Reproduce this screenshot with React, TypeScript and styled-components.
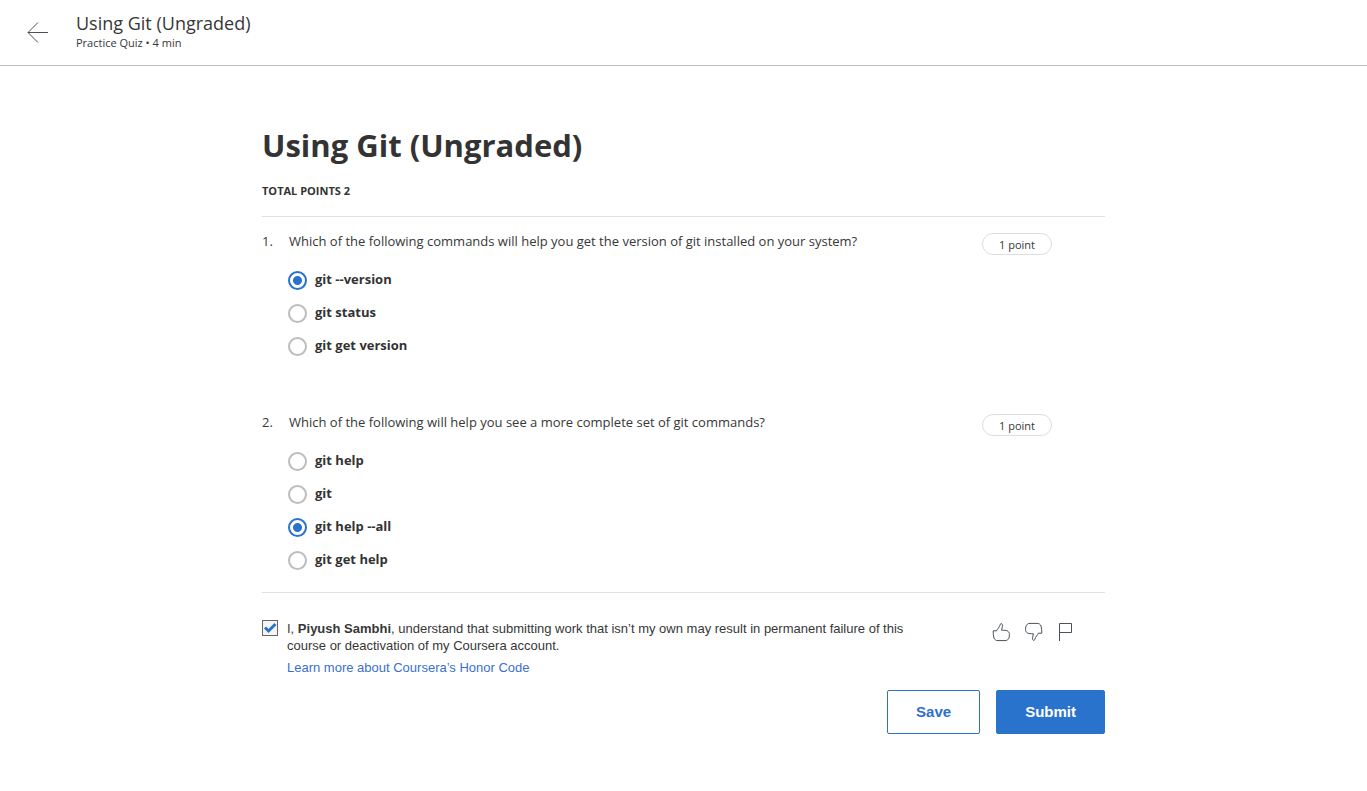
import React, { useState } from "react";
import styled, { createGlobalStyle } from "styled-components";

const blue = "#2a73cc";
const ink = "#373737";
const openSans = `"Open Sans", "Noto Sans", sans-serif`;
const arial = `"Liberation Sans", Arial, sans-serif`;

const GlobalStyle = createGlobalStyle`
  *, *::before, *::after { box-sizing: border-box; }
  body { margin: 0; background: #fff; color: ${ink}; font-family: ${openSans}; }
  h1, h2, p, ol, fieldset, legend { margin: 0; padding: 0; border: 0; font-weight: 400; }
`;

const Header = styled.header`
  display: flex;
  align-items: center;
  gap: 26px;
  height: 66px;
  padding-left: 25px;
  border-bottom: 1px solid #bdbdbd;
`;

const IconButton = styled.button`
  display: flex;
  padding: 0;
  border: 0;
  background: none;
  color: #4a5159;
  cursor: pointer;
`;

const HeaderText = styled.div`
  padding-bottom: 4px;
`;

const HeaderTitle = styled.h2`
  font-size: 18px;
  line-height: 24px;
`;

const HeaderMeta = styled.p`
  font-size: 11px;
  line-height: 15px;
`;

const Main = styled.main`
  max-width: 843px;
  margin: 0 auto;
  padding: 57px 0;
`;

const Title = styled.h1`
  font-size: 31px;
  line-height: 44px;
  font-weight: 700;
  color: #333;
`;

const TotalPoints = styled.p`
  margin-top: 16px;
  font-size: 11px;
  line-height: 16px;
  font-weight: 700;
  color: #333;
`;

const Questions = styled.ol`
  display: grid;
  gap: 52px;
  margin-top: 17px;
  padding: 16px 0;
  border: solid #e1e1e1;
  border-width: 1px 0;
  list-style: none;
`;

const QuestionItem = styled.li`
  display: grid;
  grid-template-columns: 27px 1fr 70px;
  padding-right: 53px;
  font-size: 13px;
  line-height: 17px;
`;

const Pill = styled.span`
  height: 22px;
  border: 1px solid #dedede;
  border-radius: 11px;
  font-size: 11px;
  line-height: 22px;
  text-align: center;
`;

const Options = styled.fieldset`
  grid-column: 2 / -1;
  min-width: 0;
  padding-top: 8px;
`;

const Option = styled.label`
  display: flex;
  align-items: center;
  gap: 8px;
  width: max-content;
  height: 33px;
  margin-left: -1px;
  font-weight: 700;
  color: #333;
  cursor: pointer;
`;

const Radio = styled.input`
  appearance: none;
  width: 19px;
  height: 19px;
  margin: 2px 0 0;
  border: 2px solid #bdbdbd;
  border-radius: 50%;
  background: #fff;

  &:checked {
    border-color: ${blue};
    background: radial-gradient(circle, ${blue} 4px, #fff 5px);
  }
`;

const Agreement = styled.section`
  display: flex;
  align-items: flex-start;
  justify-content: space-between;
  gap: 24px;
  padding: 27px 32px 0 0;
  font-family: ${arial};
  font-size: 13px;
  line-height: 17px;
`;

const AgreementBody = styled.div`
  display: grid;
  grid-template-columns: 16px 1fr;
  column-gap: 9px;
  max-width: 656px;
`;

const CheckWrap = styled.span`
  display: grid;
  height: 16px;
  color: ${blue};

  > * { grid-area: 1 / 1; }
  svg { pointer-events: none; }
`;

const Checkbox = styled.input`
  appearance: none;
  width: 16px;
  height: 16px;
  margin: 0;
  border: 1px solid #666;
  background: #f5f5f5;

  &:not(:checked) + svg { visibility: hidden; }
`;

const HonorLink = styled.a`
  grid-column: 2;
  justify-self: start;
  margin-top: 5px;
  color: #3a6fd0;
  text-decoration: none;
`;

const Feedback = styled.div`
  display: flex;
  gap: 15px;
  padding-top: 2px;
`;

const Actions = styled.div`
  display: flex;
  justify-content: flex-end;
  gap: 16px;
  margin-top: 14px;
`;

const ActionButton = styled.button<{ $primary?: boolean }>`
  height: 44px;
  padding: 0 28px;
  border: 1px solid ${blue};
  border-radius: 2px;
  background: ${(p) => (p.$primary ? blue : "#fff")};
  color: ${(p) => (p.$primary ? "#fff" : "#2f6fd0")};
  font: 700 15px/20px ${arial};
  cursor: pointer;
`;

const thumbPath =
  "M1.2 8.8H4.7C5.2 6.8 7.4 5.6 8.2 2.8C8.5 1.6 8.9 1.4 9.5 1.6C10.7 2.2 10.5 3.5 10.3 4.8L9.6 8.2C12 8.4 14 8.2 15.2 8.8C16.6 9.5 17.4 10.6 17.4 12.6C17.4 14.4 17.2 16 16.2 17.2C15.4 18.2 14.6 18.6 13 18.6H6C4 18.6 2.6 17.8 2 16C1.3 13.6 1.2 11.6 1.2 8.8Z";

const ThumbIcon = ({ down }: { down?: boolean }) => (
  <svg width="18" height="20" viewBox="0 0 18 20" fill="none" stroke="currentColor" strokeLinejoin="round">
    <path d={thumbPath} transform={down ? "rotate(180 9 10)" : undefined} />
  </svg>
);

const questions = [
  {
    text: "Which of the following commands will help you get the version of git installed on your system?",
    options: ["git --version", "git status", "git get version"],
    answer: 0,
  },
  {
    text: "Which of the following will help you see a more complete set of git commands?",
    options: ["git help", "git", "git help --all", "git get help"],
    answer: 2,
  },
];

function Question({ index }: { index: number }) {
  const q = questions[index];
  const [picked, setPicked] = useState(q.answer);
  return (
    <QuestionItem>
      <span>{index + 1}.</span>
      <p id={`question-${index}`}>{q.text}</p>
      <Pill>1 point</Pill>
      <Options aria-labelledby={`question-${index}`}>
        {q.options.map((option, i) => (
          <Option key={option}>
            <Radio type="radio" name={`question-${index}`} checked={picked === i} onChange={() => setPicked(i)} />
            {option}
          </Option>
        ))}
      </Options>
    </QuestionItem>
  );
}

export default function App() {
  const [agreed, setAgreed] = useState(true);
  return (
    <>
      <GlobalStyle />
      <Header>
        <IconButton type="button" aria-label="Back">
          <svg width="25" height="24" viewBox="0 0 25 24" fill="none" stroke="currentColor">
            <path d="M23 11.5H3M13 1.5L3 11.5L13 21.5" />
          </svg>
        </IconButton>
        <HeaderText>
          <HeaderTitle>Using Git (Ungraded)</HeaderTitle>
          <HeaderMeta>Practice Quiz • 4 min</HeaderMeta>
        </HeaderText>
      </Header>
      <Main>
        <Title>Using Git (Ungraded)</Title>
        <TotalPoints>TOTAL POINTS 2</TotalPoints>
        <Questions>
          {questions.map((q, i) => (
            <Question key={q.text} index={i} />
          ))}
        </Questions>
        <Agreement>
          <AgreementBody>
            <CheckWrap>
              <Checkbox id="agree" type="checkbox" checked={agreed} onChange={(e) => setAgreed(e.target.checked)} />
              <svg width="16" height="16" viewBox="0 0 16 16" fill="none" stroke="currentColor" strokeWidth="3">
                <path d="M3 7.5L6.5 11L13.5 4" />
              </svg>
            </CheckWrap>
            <label htmlFor="agree">
              I, <strong>Piyush Sambhi</strong>, understand that submitting work that isn’t my own may result in
              permanent failure of this course or deactivation of my Coursera account.
            </label>
            <HonorLink href="#honor-code">Learn more about Coursera’s Honor Code</HonorLink>
          </AgreementBody>
          <Feedback>
            <IconButton type="button" aria-label="Like">
              <ThumbIcon />
            </IconButton>
            <IconButton type="button" aria-label="Dislike">
              <ThumbIcon down />
            </IconButton>
            <IconButton type="button" aria-label="Report an issue">
              <svg width="15" height="20" viewBox="0 0 15 20" fill="none" stroke="currentColor">
                <path d="M1.5 19V1.5H13.5V10.5H1.5" />
              </svg>
            </IconButton>
          </Feedback>
        </Agreement>
        <Actions>
          <ActionButton type="button">Save</ActionButton>
          <ActionButton type="submit" $primary>
            Submit
          </ActionButton>
        </Actions>
      </Main>
    </>
  );
}
